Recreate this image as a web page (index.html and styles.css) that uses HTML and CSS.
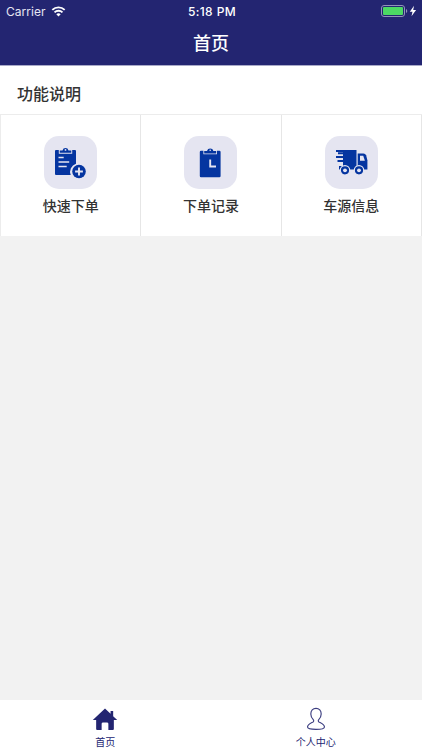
FILE: index.html
```html
<!DOCTYPE html>
<html lang="zh-CN">
<head>
  <meta charset="UTF-8" />
  <meta name="viewport" content="width=device-width, initial-scale=1" />
  <title>首页</title>
  <link rel="stylesheet" href="styles.css">
</head>

<body>
  <header class="header">
    <div class="status">
      <div class="status-left">
        <span class="carrier">Carrier</span>
        <svg class="wifi" width="15" height="11" viewBox="0 0 14 11">
          <path d="M.8 3.9a9 9 0 0 1 12.4 0M3 6.4a5.8 5.8 0 0 1 8 0" fill="none" stroke="#fff" stroke-width="1.9" />
          <path d="M4.8 8.2a3.3 3.3 0 0 1 4.4 0L7 10.5z" fill="#fff" />
        </svg>
      </div>
      <span class="time">5:18 PM</span>
      <div class="status-right">
        <svg width="37" height="12" viewBox="0 0 37 12">
          <rect x=".5" y=".5" width="23" height="11" rx="2.5" fill="none" stroke="#9293b9" />
          <rect x="2" y="2" width="20" height="8" rx="1" fill="#4cd964" />
          <path d="M25 4a2.2 2.2 0 0 1 0 4z" fill="#9293b9" />
          <path d="M33 .8 28.8 6.7h2.7l-1 4.5 4.6-6.2h-2.9z" fill="#fff" />
        </svg>
      </div>
    </div>
    <h1 class="title">首页</h1>
  </header>

  <main class="content">
    <h2 class="section-title">功能说明</h2>
    <div class="menu">
      <a class="menu-item">
        <svg class="menu-icon" viewBox="0 0 53 53">
          <path d="M12 14h2.8v3.8h13.4V14H31a1 1 0 0 1 1 1v12.8A8.4 8.4 0 0 0 26.7 39H12a1 1 0 0 1-1-1V15a1 1 0 0 1 1-1z" fill="#0535a0" />
          <path d="M15.7 16.8v-2.4h2.8a3.1 3.1 0 0 1 6 0h2.8v2.4z" fill="#0535a0" />
          <circle cx="21.5" cy="13.9" r=".9" fill="#e5e5f1" />
          <path d="M14.5 21.5h5.2M14.5 26h10.7M14.5 30.5h8.2" stroke="#e5e5f1" stroke-width="1.6" />
          <circle cx="35" cy="35.5" r="6.8" fill="#0535a0" />
          <path d="M35 31.6v7.8M31.1 35.5h7.8" stroke="#e5e5f1" stroke-width="1.9" />
        </svg>
        <span>快速下单</span>
      </a>
      <a class="menu-item">
        <svg class="menu-icon" viewBox="0 0 53 53">
          <path d="M17 14.8h2.4v3.5H33v-3.5h2.4a1.2 1.2 0 0 1 1.2 1.2v24a1.2 1.2 0 0 1-1.2 1.2H17a1.2 1.2 0 0 1-1.2-1.2V16a1.2 1.2 0 0 1 1.2-1.2z" fill="#0535a0" />
          <path d="M20.2 17.4V15H23a3.3 3.3 0 0 1 6.400 0h2.800v2.400z" fill="#0535a0" />
          <circle cx="26.2" cy="14.2" r=".8" fill="#e5e5f1" />
          <path d="M26.200 23.500v7H32" fill="none" stroke="#e5e5f1" stroke-width="1.900" />
        </svg>
        <span>下单记录</span>
      </a>
      <a class="menu-item">
        <svg class="menu-icon" viewBox="0 0 53 53">
          <path d="M11 14h20.500v19.500H14v-3.500h4v-4h-5.500v-2h5.500v-2h-7v-2h7v-1.700h-5v-2h5V16h-7z" fill="#0535a0" />
          <path d="M32.700 17.500h5.800a3 3 0 0 1 2.600 1.700l1.300 5v9.300h-9.700z" fill="#0535a0" />
          <path d="M35 19.700h3.200l1.700 5.100H35z" fill="#e5e5f1" />
          <g fill="#0535a0" stroke="#e5e5f1" stroke-width="1.200">
            <circle cx="20" cy="34.300" r="4.700" />
            <circle cx="34" cy="34.300" r="4.700" />
          </g>
          <circle cx="20" cy="34.300" r="1.900" fill="#e5e5f1" />
          <circle cx="34" cy="34.300" r="1.900" fill="#e5e5f1" />
        </svg>
        <span>车源信息</span>
      </a>
    </div>
  </main>

  <nav class="tabbar">
    <a class="tab">
      <svg class="tab-icon" viewBox="0 0 26 26">
        <path d="M13 1.500.3 13.500h3.500V23c0 .6.4 1 1 1h4.700v-6.500a1.500 1.500 0 0 1 1.500-1.500h4a1.500 1.500 0 0 1 1.500 1.500V24h4.700c.6 0 1-.4 1-1v-9.500h3.500L21.500 9.700V4.200h-2.700v2.900z" fill="#232571" />
      </svg>
      <span>首页</span>
    </a>
    <a class="tab">
      <svg class="tab-icon" viewBox="0 0 26 26">
        <path d="M13 1.500c-3.300 0-5.400 2.300-5.400 5.700 0 2.500 1 4.500 2.700 6.200.5.6.4 1.800-.3 2.200-2.500 1.300-5.800 2.300-5.800 5.300 0 2 3.600 2.400 8.800 2.400s8.800-.4 8.800-2.400c0-3-3.300-4-5.800-5.300-.7-.4-.8-1.600-.3-2.200 1.700-1.700 2.700-3.700 2.700-6.200 0-3.400-2.100-5.700-5.400-5.700z" fill="none" stroke="#3c3e80" stroke-width="1.200" />
      </svg>
      <span>个人中心</span>
    </a>
  </nav>
</body>
</html>
```

FILE: styles.css
```css
* { box-sizing: border-box; margin: 0; padding: 0; }

body {
  font-family: "Liberation Sans", "Noto Sans CJK SC", sans-serif;
  background: #f2f2f2;
  color: #333;
  height: 100vh;
  display: flex;
  flex-direction: column;
}

/* --- Header --- */
.header {
  height: 66px;
  background: #232571;
  border-bottom: 1px solid #a9aac8;
  color: #fff;
}

.status {
  display: grid;
  grid-template-columns: 1fr auto 1fr;
  align-items: center;
  height: 22px;
  padding: 0 4px 0 6px;
  font-family: Inter, sans-serif;
  font-size: 12px;
}
.status-left {
  display: flex;
  align-items: center;
  gap: 5px;
}
.carrier {
  color: #e6e6f2;
  letter-spacing: 0.05px;
}
.time {
  font-weight: 500;
  letter-spacing: 0.4px;
}
.status-right {
  display: flex;
  justify-content: flex-end;
}

.title {
  font-size: 18px;
  font-weight: 500;
  line-height: 44px;
  text-align: center;
}

/* --- Menu --- */
.content {
  flex: 1;
}
.section-title {
  height: 48px;
  padding-left: 17px;
  background: #fff;
  font-size: 16px;
  font-weight: 500;
  line-height: 57px;
}
.menu {
  display: grid;
  grid-template-columns: repeat(3, 1fr);
  height: 122px;
  background: #fff;
  border-top: 1px solid #ececec;
  border-left: 1px solid #ececec;
}
.menu-item {
  display: flex;
  flex-direction: column;
  align-items: center;
  padding-top: 21px;
  border-right: 1px solid #e6e6e6;
  font-size: 14px;
  font-weight: 500;
  line-height: 20px;
}
.menu-icon {
  width: 53px;
  height: 53px;
  margin-bottom: 7px;
  border-radius: 15px;
  background: #e5e5f1;
}

/* --- Tab bar --- */
.tabbar {
  display: flex;
  height: 50px;
  padding-right: 1px;
  background: #fff;
}
.tab {
  flex: 1;
  display: flex;
  flex-direction: column;
  align-items: center;
  padding-top: 7px;
  color: #232571;
  font-size: 10px;
  line-height: 14px;
}
.tab-icon {
  width: 26px;
  height: 26px;
  margin-bottom: 4px;
}
```
